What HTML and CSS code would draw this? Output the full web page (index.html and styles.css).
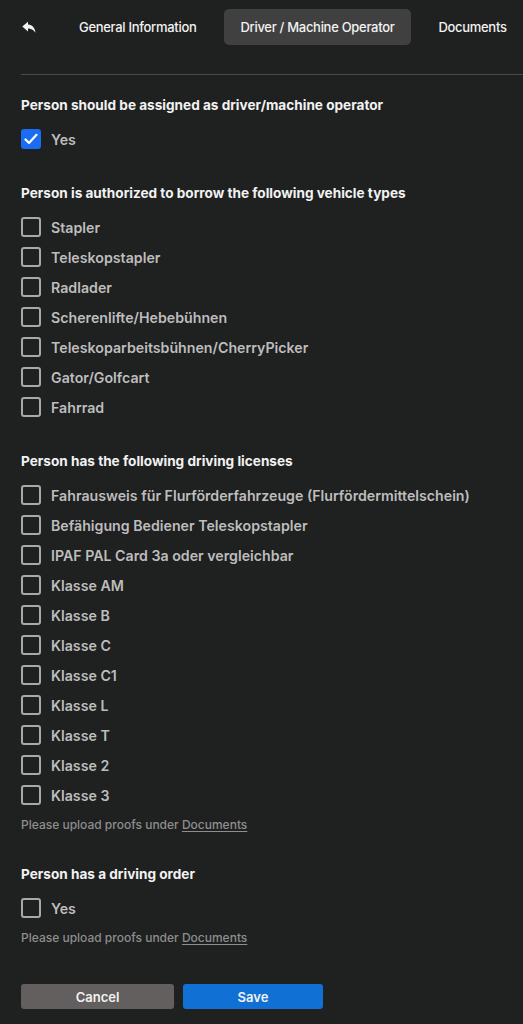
FILE: index.html
```html
<!DOCTYPE html>
<html lang="en">
<head>
<meta charset="utf-8">
<title>Driver / Machine Operator</title>
<link rel="stylesheet" href="styles.css">
</head>
<body>
<header class="tabs">
  <button class="back" aria-label="Back">
    <svg width="14" height="13" viewBox="0 0 14 13"><path d="M6 0.8 L0.3 5.6 L6 10.4 V7.5 C9 7.5 11.4 8.5 13.5 11.8 C13 7.4 10.6 4 6 3.6 Z" fill="#f2f2f2"/></svg>
  </button>
  <span class="tab">General Information</span>
  <span class="tab active">Driver / Machine Operator</span>
  <span class="tab">Documents</span>
</header>
<div class="divider"></div>

<main class="form">
  <section class="group">
    <h2 class="title">Person should be assigned as driver/machine operator</h2>
    <label class="row"><span class="box checked"><svg width="14" height="12" viewBox="0 0 14 12"><path d="M1.5 6.5 L5 10 L12.5 1.8" fill="none" stroke="#fff" stroke-width="2.2" stroke-linecap="round" stroke-linejoin="round"/></svg></span><span class="label">Yes</span></label>
  </section>

  <section class="group">
    <h2 class="title">Person is authorized to borrow the following vehicle types</h2>
    <label class="row"><span class="box"></span><span class="label">Stapler</span></label>
    <label class="row"><span class="box"></span><span class="label">Teleskopstapler</span></label>
    <label class="row"><span class="box"></span><span class="label">Radlader</span></label>
    <label class="row"><span class="box"></span><span class="label">Scherenlifte/Hebebühnen</span></label>
    <label class="row"><span class="box"></span><span class="label">Teleskoparbeitsbühnen/CherryPicker</span></label>
    <label class="row"><span class="box"></span><span class="label">Gator/Golfcart</span></label>
    <label class="row"><span class="box"></span><span class="label">Fahrrad</span></label>
  </section>

  <section class="group">
    <h2 class="title">Person has the following driving licenses</h2>
    <label class="row"><span class="box"></span><span class="label">Fahrausweis für Flurförderfahrzeuge (Flurfördermittelschein)</span></label>
    <label class="row"><span class="box"></span><span class="label">Befähigung Bediener Teleskopstapler</span></label>
    <label class="row"><span class="box"></span><span class="label">IPAF PAL Card 3a oder vergleichbar</span></label>
    <label class="row"><span class="box"></span><span class="label">Klasse AM</span></label>
    <label class="row"><span class="box"></span><span class="label">Klasse B</span></label>
    <label class="row"><span class="box"></span><span class="label">Klasse C</span></label>
    <label class="row"><span class="box"></span><span class="label">Klasse C1</span></label>
    <label class="row"><span class="box"></span><span class="label">Klasse L</span></label>
    <label class="row"><span class="box"></span><span class="label">Klasse T</span></label>
    <label class="row"><span class="box"></span><span class="label">Klasse 2</span></label>
    <label class="row"><span class="box"></span><span class="label">Klasse 3</span></label>
    <p class="note">Please upload proofs under <a href="#">Documents</a></p>
  </section>

  <section class="group">
    <h2 class="title">Person has a driving order</h2>
    <label class="row"><span class="box"></span><span class="label">Yes</span></label>
    <p class="note">Please upload proofs under <a href="#">Documents</a></p>
  </section>

  <div class="actions">
    <button class="btn cancel">Cancel</button>
    <button class="btn save">Save</button>
  </div>
</main>
</body>
</html>
```

FILE: styles.css
```css
* { box-sizing: border-box; }
html, body { margin: 0; padding: 0; }
body {
  background: #1f2020;
  color: #f0f0f0;
  font-family: Inter, Roboto, "Liberation Sans", sans-serif;
  width: 523px;
  min-height: 1024px;
  overflow: hidden;
}
.tabs {
  display: flex;
  align-items: center;
  padding: 9px 0 0 0;
  height: 45px;
}
.back {
  background: none;
  border: 0;
  padding: 0;
  margin: 0 26px 0 22px;
  width: 14px;
  height: 13px;
  display: flex;
}
.tab {
  height: 36px;
  display: flex;
  align-items: center;
  padding: 0 17px;
  margin-right: 10px;
  font-size: 13px;
  letter-spacing: -0.3px;
  font-weight: 500;
  color: #f2f2f2;
  border-radius: 5px;
  white-space: nowrap;
}
.tab.active { background: #404040; }
.divider {
  margin: 29px 0 0 21px;
  height: 1px;
  background: #4a4a4a;
}
.form {
  display: flex;
  flex-direction: column;
  padding: 20px 0 0 21px;
}
.group { margin: 0 0 29px 0; }
.title {
  margin: 0 0 9px 0;
  font-size: 13.6px;
  line-height: 20px;
  font-weight: 700;
  color: #f2f2f2;
}
.row {
  display: flex;
  align-items: center;
  height: 30px;
  gap: 10px;
}
.box {
  width: 20px;
  height: 20px;
  border: 2px solid #a9a9a9;
  border-radius: 3px;
  display: flex;
  align-items: center;
  justify-content: center;
  flex: none;
}
.box.checked { background: #1a6df2; border-color: #1a6df2; }
.label {
  font-size: 14.2px;
  font-weight: 600;
  color: #bdbdbd;
}
.note {
  margin: 7px 0 2px 0;
  font-size: 12px;
  line-height: 16px;
  font-weight: 500;
  color: #8e8e8e;
}
.note a { color: #8e8e8e; text-decoration: underline; text-underline-offset: 2px; }
.actions {
  display: flex;
  gap: 9px;
  margin-top: 7px;
}
.btn {
  height: 25px;
  border: 0;
  border-radius: 3px;
  font-family: Inter, Roboto, "Liberation Sans", sans-serif;
  font-size: 13px;
  font-weight: 600;
  color: #f2f2f2;
}
.cancel { width: 153px; background: #625f5e; }
.save { width: 140px; background: #1170d3; }
```
